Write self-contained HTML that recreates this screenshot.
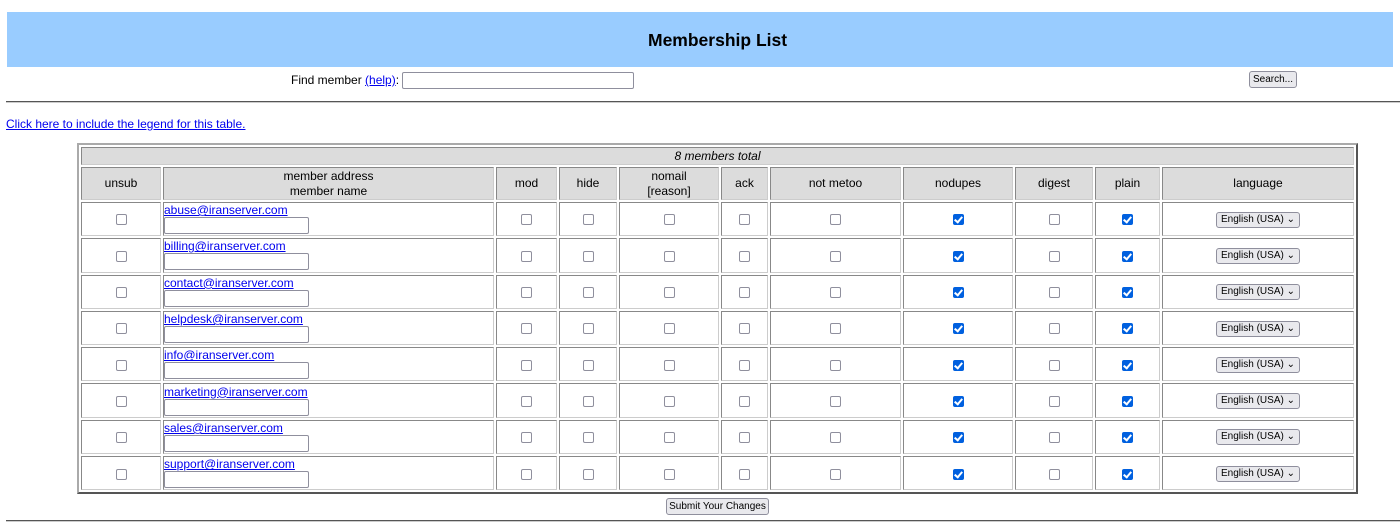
<!DOCTYPE html>
<html><head><style>
body{margin:0;background:#fff;font-family:"Liberation Sans",Tahoma,sans-serif;font-size:12px;color:#000;width:1400px;height:523px;overflow:hidden;position:relative}
.bar{position:absolute;left:7px;top:12px;width:1386px;height:55px;background:#99ccff;font-weight:bold;font-size:17.5px;line-height:57px}
.bar span{position:absolute;left:641px;top:0}
a{color:#0000ee}
.inp{display:inline-block;border:1px solid #8f8f9d;border-radius:2px;background:#fff;height:15px;vertical-align:middle}
.btn{position:absolute;border:1px solid #8f8f9d;border-radius:3px;background:#e9e9ed;font-size:10px;text-align:center;line-height:15px;height:15px;white-space:nowrap}
.hr{position:absolute;height:0;border-top:1px solid #555;border-bottom:1px solid #ccc}
table{position:absolute;left:77px;top:143px;border:2px solid;border-color:#aaa #555 #555 #aaa;border-spacing:2px;table-layout:fixed}
td{border:1px solid;border-color:#888 #ccc #ccc #888;text-align:center;padding:0;font-size:12px}
tr.h td{background:#dcdcdc;line-height:15px}
.cb{display:inline-block;width:9px;height:9px;border:1px solid #8f8f9d;border-radius:2px;background:#fff;vertical-align:middle}
.ck{display:inline-block;width:11px;height:11px;border-radius:2px;background:#0060df;vertical-align:middle;position:relative}
.ck:after{content:"";position:absolute;left:3px;top:1px;width:3px;height:6px;border:solid #fff;border-width:0 2px 2px 0;transform:rotate(40deg)}
.sel{display:inline-block;border:1px solid #8f8f9d;border-radius:3px;background:#e9e9ed;font-size:10px;padding:0 4px;height:14px;line-height:14px}
td.a{text-align:left;line-height:13px}
tr.d{height:34.3px}
</style></head><body>
<div class="bar"><span>Membership List</span></div>
<div style="position:absolute;left:291px;top:72px;line-height:16px">Find member <a href="#">(help)</a>: <span class="inp" style="width:230px"></span></div>
<div class="btn" style="left:1249px;top:71px;width:46px">Search...</div>
<div class="hr" style="left:6px;top:101px;width:1394px"></div>
<div style="position:absolute;left:6px;top:117px"><a href="#">Click here to include the legend for this table.</a></div>
<table>
<colgroup><col style="width:80px"><col style="width:331px"><col style="width:61px"><col style="width:58px"><col style="width:100px"><col style="width:47px"><col style="width:131px"><col style="width:110px"><col style="width:78px"><col style="width:65px"><col style="width:192px"></colgroup>
<tr class="h" style="height:18px"><td colspan="11"><i>8 members total</i></td></tr>
<tr class="h" style="height:33px"><td>unsub</td><td>member address<br>member name</td><td>mod</td><td>hide</td><td>nomail<br>[reason]</td><td>ack</td><td>not metoo</td><td>nodupes</td><td>digest</td><td>plain</td><td>language</td></tr>
<tr class="d"><td><span class="cb"></span></td><td class="a"><a href="#">abuse@iranserver.com</a><br><span class="inp" style="width:143px"></span></td><td><span class="cb"></span></td><td><span class="cb"></span></td><td><span class="cb"></span></td><td><span class="cb"></span></td><td><span class="cb"></span></td><td><span class="ck"></span></td><td><span class="cb"></span></td><td><span class="ck"></span></td><td><span class="sel">English (USA) &#8964;</span></td></tr>
<tr class="d"><td><span class="cb"></span></td><td class="a"><a href="#">billing@iranserver.com</a><br><span class="inp" style="width:143px"></span></td><td><span class="cb"></span></td><td><span class="cb"></span></td><td><span class="cb"></span></td><td><span class="cb"></span></td><td><span class="cb"></span></td><td><span class="ck"></span></td><td><span class="cb"></span></td><td><span class="ck"></span></td><td><span class="sel">English (USA) &#8964;</span></td></tr>
<tr class="d"><td><span class="cb"></span></td><td class="a"><a href="#">contact@iranserver.com</a><br><span class="inp" style="width:143px"></span></td><td><span class="cb"></span></td><td><span class="cb"></span></td><td><span class="cb"></span></td><td><span class="cb"></span></td><td><span class="cb"></span></td><td><span class="ck"></span></td><td><span class="cb"></span></td><td><span class="ck"></span></td><td><span class="sel">English (USA) &#8964;</span></td></tr>
<tr class="d"><td><span class="cb"></span></td><td class="a"><a href="#">helpdesk@iranserver.com</a><br><span class="inp" style="width:143px"></span></td><td><span class="cb"></span></td><td><span class="cb"></span></td><td><span class="cb"></span></td><td><span class="cb"></span></td><td><span class="cb"></span></td><td><span class="ck"></span></td><td><span class="cb"></span></td><td><span class="ck"></span></td><td><span class="sel">English (USA) &#8964;</span></td></tr>
<tr class="d"><td><span class="cb"></span></td><td class="a"><a href="#">info@iranserver.com</a><br><span class="inp" style="width:143px"></span></td><td><span class="cb"></span></td><td><span class="cb"></span></td><td><span class="cb"></span></td><td><span class="cb"></span></td><td><span class="cb"></span></td><td><span class="ck"></span></td><td><span class="cb"></span></td><td><span class="ck"></span></td><td><span class="sel">English (USA) &#8964;</span></td></tr>
<tr class="d"><td><span class="cb"></span></td><td class="a"><a href="#">marketing@iranserver.com</a><br><span class="inp" style="width:143px"></span></td><td><span class="cb"></span></td><td><span class="cb"></span></td><td><span class="cb"></span></td><td><span class="cb"></span></td><td><span class="cb"></span></td><td><span class="ck"></span></td><td><span class="cb"></span></td><td><span class="ck"></span></td><td><span class="sel">English (USA) &#8964;</span></td></tr>
<tr class="d"><td><span class="cb"></span></td><td class="a"><a href="#">sales@iranserver.com</a><br><span class="inp" style="width:143px"></span></td><td><span class="cb"></span></td><td><span class="cb"></span></td><td><span class="cb"></span></td><td><span class="cb"></span></td><td><span class="cb"></span></td><td><span class="ck"></span></td><td><span class="cb"></span></td><td><span class="ck"></span></td><td><span class="sel">English (USA) &#8964;</span></td></tr>
<tr class="d"><td><span class="cb"></span></td><td class="a"><a href="#">support@iranserver.com</a><br><span class="inp" style="width:143px"></span></td><td><span class="cb"></span></td><td><span class="cb"></span></td><td><span class="cb"></span></td><td><span class="cb"></span></td><td><span class="cb"></span></td><td><span class="ck"></span></td><td><span class="cb"></span></td><td><span class="ck"></span></td><td><span class="sel">English (USA) &#8964;</span></td></tr>
</table>
<div class="btn" style="left:666px;top:498px;width:101px">Submit Your Changes</div>
<div class="hr" style="left:6px;top:520px;width:1394px"></div>
</body></html>
